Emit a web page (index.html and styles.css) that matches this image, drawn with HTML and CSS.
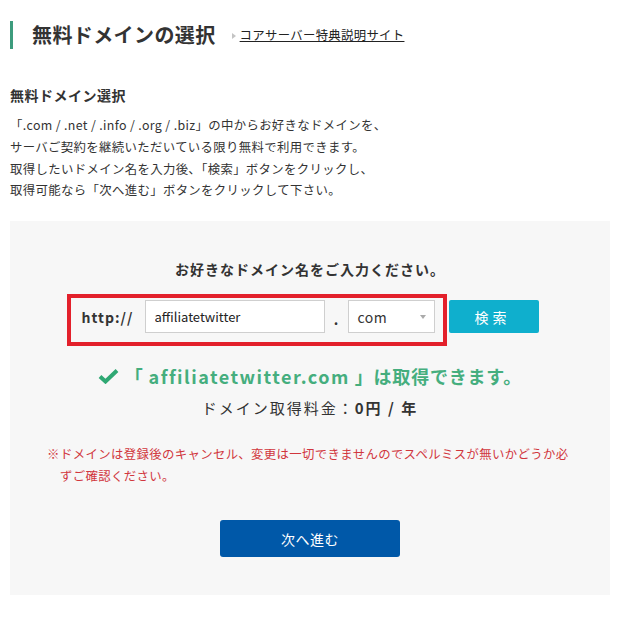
FILE: index.html
```html
<!DOCTYPE html>
<html lang="ja">
<head>
<meta charset="utf-8">
<title>無料ドメインの選択</title>
<link rel="stylesheet" href="styles.css">
</head>
<body>
<div class="page">
  <header class="page-head">
    <h1 class="page-title">無料ドメインの選択</h1>
    <span class="sub-link"><span class="tri"></span><a href="#">コアサーバー特典説明サイト</a></span>
  </header>

  <h2 class="section-title">無料ドメイン選択</h2>
  <p class="intro">「.com / .net / .info / .org / .biz」の中からお好きなドメインを、<br>サーバご契約を継続いただいている限り無料で利用できます。<br>取得したいドメイン名を入力後、「検索」ボタンをクリックし、<br>取得可能なら「次へ進む」ボタンをクリックして下さい。</p>

  <section class="panel">
    <p class="panel-title">お好きなドメイン名をご入力ください。</p>
    <div class="form-row">
      <span class="proto">http://</span>
      <input class="domain-input" type="text" value="affiliatetwitter">
      <span class="dot">.</span>
      <div class="tld-select"><span>com</span><span class="caret"></span></div>
      <button class="search-btn">検索</button>
      <div class="highlight"></div>
    </div>
    <p class="result">
      <svg class="check" width="21" height="16" viewBox="0 0 21 16"><path d="M2 8.5 L7.5 13.5 L19 2.5" fill="none" stroke="#2fa873" stroke-width="4" stroke-linejoin="miter"/></svg>
      <span>「 <span class="latin">affiliatetwitter.com</span> 」は取得できます。</span>
    </p>
    <p class="fee">ドメイン取得料金：<b>0円 / 年</b></p>
    <p class="note"><span class="mark">※</span>ドメインは登録後のキャンセル、変更は一切できませんのでスペルミスが無いかどうか必ずご確認ください。</p>
    <div class="actions"><button class="next-btn">次へ進む</button></div>
  </section>
</div>
</body>
</html>
```

FILE: styles.css
```css
* { box-sizing: border-box; }
body {
  margin: 0;
  background: #fff;
  color: #333;
  font-family: "Noto Sans CJK JP", "Noto Sans", sans-serif;
}
.page {
  padding: 21px 9px 0 10px;
}
.page-head {
  display: flex;
  align-items: center;
  height: 28px;
  border-left: 3px solid #3d9c7d;
  padding-left: 19px;
}
.page-title {
  margin: 0;
  font-size: 20px;
  line-height: 28px;
  font-weight: bold;
  letter-spacing: 0.4px;
  color: #333;
}
.sub-link {
  display: flex;
  align-items: center;
  margin-left: 16px;
  font-size: 12.4px;
  letter-spacing: 0.3px;
}
.sub-link .tri {
  width: 0; height: 0;
  border-left: 4px solid #c4c4c4;
  border-top: 3.5px solid transparent;
  border-bottom: 3.5px solid transparent;
  margin-right: 4px;
  margin-top: 1px;
}
.sub-link a {
  color: #222;
  text-decoration: underline;
}
.section-title {
  margin: 36px 0 0;
  font-size: 14px;
  line-height: 20px;
  font-weight: bold;
  letter-spacing: 0.5px;
}
.intro {
  margin: 10px 0 0;
  font-size: 12.4px;
  letter-spacing: 0.35px;
  line-height: 21.8px;
}
.panel {
  margin-top: 19px;
  background: #f7f7f7;
  padding: 38px 37px 38px;
}
.panel-title {
  margin: 0;
  text-align: center;
  font-size: 14px;
  letter-spacing: 1px;
  line-height: 20px;
  font-weight: bold;
  color: #333;
}
.form-row {
  position: relative;
  margin: 21px auto 0;
  width: 457px;
  display: flex;
  align-items: center;
  height: 33px;
}
.proto {
  width: 53px;
  font-size: 14px;
  font-weight: bold;
  margin-right: 10px;
  letter-spacing: 1px;
  white-space: nowrap;
}
.domain-input {
  width: 180px;
  height: 33px;
  border: 1px solid #cfcfcf;
  background: #fff;
  padding: 0 9px;
  font-family: inherit;
  font-size: 13px;
  color: #222;
  outline: none;
}
.dot {
  width: 23px;
  text-align: center;
  font-size: 14px;
  font-weight: bold;
  padding-top: 4px;
}
.tld-select {
  width: 87px;
  height: 33px;
  border: 1px solid #cfcfcf;
  background: #fff;
  display: flex;
  align-items: center;
  justify-content: space-between;
  padding: 0 8px 0 9px;
  font-size: 14px;
  letter-spacing: 0.5px;
  color: #333;
}
.caret {
  width: 0; height: 0;
  border-top: 4px solid #aaa;
  border-left: 3.5px solid transparent;
  border-right: 3.5px solid transparent;
}
.search-btn {
  margin-left: 14px;
  width: 90px;
  height: 33px;
  border: 0;
  border-radius: 2px;
  background: #0fafcd;
  color: #fff;
  font-family: inherit;
  font-size: 14px;
  letter-spacing: 4px;
  padding-left: 4px;
}
.highlight {
  position: absolute;
  left: -15px;
  top: -6px;
  width: 380px;
  height: 52px;
  border: 4px solid #e3202b;
  pointer-events: none;
}
.result {
  margin: 31px 0 0;
  display: flex;
  align-items: center;
  justify-content: center;
  font-size: 18px;
  line-height: 24px;
  font-weight: bold;
  letter-spacing: 0.8px;
  color: #45ae7e;
}
.result .latin { letter-spacing: 1.5px; }
.check { margin-right: 6px; }
.fee {
  margin: 9px 0 0;
  text-align: center;
  font-size: 15px;
  line-height: 22px;
  letter-spacing: 2px;
  color: #333;
}
.note {
  margin: 24px 0 0;
  padding-left: 13px;
  text-indent: -13px;
  font-size: 12.4px;
  letter-spacing: 0.35px;
  line-height: 22px;
  color: #d1363d;
}
.mark { display: inline-block; width: 13px; text-indent: 0; letter-spacing: 0; }
.actions {
  margin-top: 33px;
  display: flex;
  justify-content: center;
}
.next-btn {
  width: 180px;
  height: 37px;
  border: 0;
  border-radius: 3px;
  background: #0058a8;
  color: #fff;
  font-family: inherit;
  font-size: 14px;
  letter-spacing: 0.5px;
}
```
